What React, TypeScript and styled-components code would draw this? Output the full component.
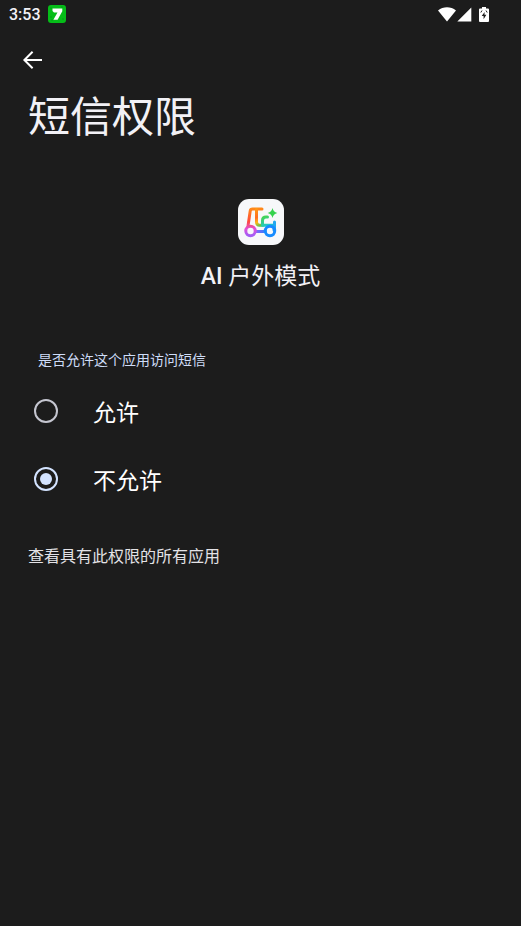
import React, { useState } from "react";
import styled, { createGlobalStyle } from "styled-components";

const GlobalStyle = createGlobalStyle`
  *, *::before, *::after { box-sizing: border-box; }
  body { margin: 0; background: #1c1c1c; }
`;

const Screen = styled.div`
  min-height: 100vh;
  background: #1c1c1c;
  color: #f2f1f6;
  font-family: "Noto Sans CJK SC", sans-serif;
`;

const StatusBar = styled.div`
  display: flex;
  align-items: center;
  justify-content: space-between;
  height: 28px;
  padding: 0 32px 0 9px;
`;

const StatusGroup = styled.div`
  display: flex;
  align-items: center;
  gap: 7px;
`;

const SignalGroup = styled.div`
  display: flex;
  align-items: center;
  gap: 1px;
`;

const Clock = styled.span`
  padding-top: 2px;
  font-family: Roboto, sans-serif;
  font-size: 16px;
  line-height: 20px;
  font-weight: 500;
`;

const Icon = styled.svg`
  display: block;
  flex: none;
`;

const BackButton = styled.button`
  display: flex;
  align-items: center;
  justify-content: center;
  width: 48px;
  height: 48px;
  margin: 8px 0 0 8px;
  padding: 0;
  border: 0;
  background: none;
  color: #fff;
  cursor: pointer;
`;

const Title = styled.h1`
  margin: 0;
  padding: 0 28px;
  font-size: 42px;
  line-height: 60px;
  font-weight: 400;
`;

const AppHeader = styled.header`
  display: flex;
  flex-direction: column;
  align-items: center;
  gap: 12px;
  padding-top: 55px;
`;

const AppName = styled.h2`
  margin: 0;
  font-size: 23px;
  line-height: 34px;
  font-weight: 500;
  font-family: Roboto, sans-serif;
`;

const HanText = styled.span`
  font-family: "Noto Sans CJK SC", sans-serif;
  font-weight: 400;
`;

const Choices = styled.fieldset`
  margin: 55px 0 0;
  padding: 0;
  border: 0;
`;

const Legend = styled.legend`
  padding: 0 38px;
  margin-bottom: 8px;
  font-size: 14px;
  line-height: 20px;
  color: #cfddf8;
`;

const Choice = styled.label`
  display: flex;
  align-items: center;
  gap: 35px;
  height: 68px;
  padding: 0 34px;
  font-size: 23px;
  line-height: 34px;
  color: #fff;
  cursor: pointer;
`;

const Radio = styled.input`
  display: grid;
  place-items: center;
  appearance: none;
  flex: none;
  width: 24px;
  height: 24px;
  margin: 0;
  border: 2px solid #c5c6d0;
  border-radius: 50%;

  &:checked { border-color: #d3e3ff; }
  &:checked::before {
    content: "";
    width: 12px;
    height: 12px;
    border-radius: 50%;
    background: #d3e3ff;
  }
`;

const FooterLink = styled.a`
  display: block;
  margin-top: 30px;
  padding: 0 28px;
  font-size: 16px;
  line-height: 24px;
  color: #e3e2e6;
  text-decoration: none;
`;

const NotificationIcon = () => (
  <Icon width="18" height="18" viewBox="0 0 18 18" aria-hidden="true">
    <rect width="18" height="18" rx="3" fill="#05bd18" />
    <path d="M2 3h2M13 2h2M2 12h2M14 14h2M3 15h2" stroke="#079c18" strokeWidth="1" />
    <path d="M4.500 3.500h9.800v2.800L9.600 14.800H5.400L9.500 7.500H6L4.500 6z" fill="#fff" />
  </Icon>
);

const WifiIcon = () => (
  <Icon width="18" height="15" viewBox="0 0 18 15" aria-hidden="true">
    <path d="M0 3.500C5.200-.9 12.800-.9 18 3.500L9 14.500z" fill="#fff" />
  </Icon>
);

const CellIcon = () => (
  <Icon width="15" height="15" viewBox="0 0 15 15" aria-hidden="true">
    <path d="M14.300.5v14H.3z" fill="#fff" />
  </Icon>
);

const BatteryIcon = () => (
  <Icon width="10" height="15" viewBox="0 0 10 15" aria-hidden="true">
    <path d="M3 0h4v1.500h2q1 0 1 1V14q0 1-1 1H1q-1 0-1-1V2.500q0-1 1-1h2z" fill="#fff" />
    <path d="M5.600 5L2.700 8.900h1.900v3.400l2.800-4.500H5.500z" fill="#1c1c1c" />
    <path d="M1.800 5.500L3 3.500M7 3.500L8.200 5.500" stroke="#1c1c1c" strokeWidth="1" />
  </Icon>
);

const ArrowIcon = () => (
  <Icon width="20" height="20" viewBox="0 0 20 20" fill="none" stroke="currentColor" strokeWidth="2" aria-hidden="true">
    <path d="M20 10H2.500M10.600 1.800L2.400 10l8.200 8.200" />
  </Icon>
);

const AppIcon = () => (
  <Icon width="46" height="46" viewBox="0 0 46 46" fill="none" aria-hidden="true">
    <defs>
      <linearGradient id="fork" x1="12" y1="9" x2="12" y2="36" gradientUnits="userSpaceOnUse">
        <stop stopColor="#ff8b18" />
        <stop offset=".5" stopColor="#ff493b" />
        <stop offset=".78" stopColor="#df50dc" />
        <stop offset="1" stopColor="#a45df4" />
      </linearGradient>
      <linearGradient id="stem" x1="20" y1="9" x2="27" y2="26" gradientUnits="userSpaceOnUse">
        <stop stopColor="#ff9b13" />
        <stop offset=".45" stopColor="#ff6b24" />
        <stop offset=".7" stopColor="#ffb714" />
        <stop offset="1" stopColor="#39c85a" />
      </linearGradient>
      <linearGradient id="seat" x1="28" y1="17" x2="36" y2="35" gradientUnits="userSpaceOnUse">
        <stop stopColor="#44d456" />
        <stop offset=".45" stopColor="#20c9c9" />
        <stop offset="1" stopColor="#168bff" />
      </linearGradient>
      <linearGradient id="axle" x1="16" y1="0" x2="28" y2="0" gradientUnits="userSpaceOnUse">
        <stop stopColor="#9c60f5" />
        <stop offset="1" stopColor="#2b80ff" />
      </linearGradient>
    </defs>
    <rect width="46" height="46" rx="11" fill="#f7f8fa" />
    <g strokeWidth="3" strokeLinecap="round" strokeLinejoin="round">
      <path d="M10 27l2.200-15q.3-2 2.300-2H24" stroke="url(#fork)" />
      <path d="M18.500 10.500V23q0 3.200 3.200 3.200H25" stroke="url(#stem)" />
      <path d="M24.500 26v-4.500q0-3.500 3.500-3.500h1.500M25 26.200h11V31" stroke="url(#seat)" />
      <path d="M36.500 23v8" stroke="#20a8f0" />
      <path d="M18 32.500h9" stroke="url(#axle)" />
      <circle cx="12.500" cy="32" r="4.700" stroke="url(#fork)" />
      <circle cx="32" cy="32" r="4.700" stroke="#168bff" />
    </g>
    <path d="M34.500 9q.8 4 4.800 5-4 1-4.800 5-.8-4-4.800-5 4-1 4.800-5z" fill="#35d24d" />
  </Icon>
);

const options = [
  { value: "allow", label: "允许" },
  { value: "deny", label: "不允许" },
];

export default function App() {
  const [selected, setSelected] = useState("deny");
  return (
    <Screen lang="zh-CN">
      <GlobalStyle />
      <StatusBar>
        <StatusGroup>
          <Clock>3:53</Clock>
          <NotificationIcon />
        </StatusGroup>
        <StatusGroup>
          <SignalGroup>
            <WifiIcon />
            <CellIcon />
          </SignalGroup>
          <BatteryIcon />
        </StatusGroup>
      </StatusBar>
      <BackButton type="button" aria-label="返回">
        <ArrowIcon />
      </BackButton>
      <main>
        <Title>短信权限</Title>
        <AppHeader>
          <AppIcon />
          <AppName>AI <HanText>户外模式</HanText></AppName>
        </AppHeader>
        <Choices>
          <Legend>是否允许这个应用访问短信</Legend>
          {options.map(({ value, label }) => (
            <Choice key={value}>
              <Radio
                type="radio"
                name="permission"
                value={value}
                checked={selected === value}
                onChange={() => setSelected(value)}
              />
              {label}
            </Choice>
          ))}
        </Choices>
        <FooterLink href="#all-apps">查看具有此权限的所有应用</FooterLink>
      </main>
    </Screen>
  );
}
